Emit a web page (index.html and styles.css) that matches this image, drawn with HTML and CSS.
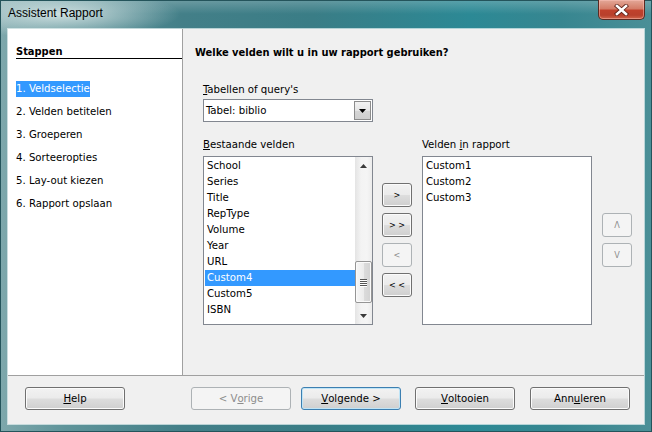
FILE: index.html
```html
<!DOCTYPE html>
<html>
<head>
<meta charset="utf-8">
<title>Assistent Rapport</title>
<link rel="stylesheet" href="styles.css">
</head>
<body>
<div class="window">
  <div class="titlebar">
    <span class="title">Assistent Rapport</span>
    <div class="close">
      <svg width="17" height="12" viewBox="0 0 17 12">
        <path d="M4 2 L13 10 M13 2 L4 10" stroke="#5a1f16" stroke-width="4.2" stroke-linecap="square" fill="none"/>
        <path d="M4 2 L13 10 M13 2 L4 10" stroke="#ffffff" stroke-width="2.6" stroke-linecap="square" fill="none"/>
      </svg>
    </div>
  </div>
  <div class="client">
    <div class="main">
      <div class="steps">
        <div class="steps-head">Stappen</div>
        <ul class="step-list">
          <li><span class="sel">1. Veldselectie</span></li>
          <li>2. Velden betitelen</li>
          <li>3. Groeperen</li>
          <li>4. Sorteeropties</li>
          <li>5. Lay-out kiezen</li>
          <li>6. Rapport opslaan</li>
        </ul>
      </div>
      <div class="content">
        <h1 class="heading">Welke velden wilt u in uw rapport gebruiken?</h1>
        <div class="field">
          <div class="label"><u>T</u>abellen of query's</div>
          <div class="combo">
            <span>Tabel: biblio</span>
            <span class="combo-btn">
              <svg width="7" height="4" viewBox="0 0 7 4"><path d="M0 0 H7 L3.5 4 Z" fill="#000"/></svg>
            </span>
          </div>
          <div class="fields">
            <div class="label lab1"><u>B</u>estaande velden</div>
            <div class="label lab2">Velden <u>i</u>n rapport</div>
            <div class="listbox list1">
              <ul class="items">
                <li>School</li>
                <li>Series</li>
                <li>Title</li>
                <li>RepType</li>
                <li>Volume</li>
                <li>Year</li>
                <li>URL</li>
                <li class="selected">Custom4</li>
                <li>Custom5</li>
                <li>ISBN</li>
              </ul>
              <div class="scrollbar">
                <div class="sb-btn">
                  <svg width="7" height="4" viewBox="0 0 7 4"><path d="M0 4 H7 L3.5 0 Z" fill="#3a3a3a"/></svg>
                </div>
                <div class="sb-track">
                  <div class="sb-thumb">
                    <span class="grip"></span><span class="grip"></span><span class="grip"></span><span class="grip"></span>
                  </div>
                </div>
                <div class="sb-btn">
                  <svg width="7" height="4" viewBox="0 0 7 4"><path d="M0 0 H7 L3.5 4 Z" fill="#3a3a3a"/></svg>
                </div>
              </div>
            </div>
            <div class="movebtns">
              <div class="btn small">&gt;</div>
              <div class="btn small">&gt; &gt;</div>
              <div class="btn small disabled">&lt;</div>
              <div class="btn small">&lt; &lt;</div>
            </div>
            <div class="listbox list2">
              <ul class="items">
                <li>Custom1</li>
                <li>Custom2</li>
                <li>Custom3</li>
              </ul>
            </div>
            <div class="orderbtns">
              <div class="btn small disabled">&#923;</div>
              <div class="btn small disabled">V</div>
            </div>
          </div>
        </div>
      </div>
    </div>
    <div class="footer">
      <div class="btn wide help"><u>H</u>elp</div>
      <div class="btn wide disabled prev">&lt; V<u>o</u>rige</div>
      <div class="btn wide default next"><u>V</u>olgende &gt;</div>
      <div class="btn wide finish"><u>V</u>oltooien</div>
      <div class="btn wide cancel">Ann<u>u</u>leren</div>
    </div>
  </div>
</div>
</body>
</html>
```
FILE: styles.css
```css
* { box-sizing: border-box; }
html, body { margin: 0; padding: 0; }
body {
  width: 652px;
  height: 432px;
  overflow: hidden;
  font-family: "DejaVu Sans Condensed", "DejaVu Sans", sans-serif;
  font-stretch: condensed;
  font-size: 11.3px;
  color: #000;
}
u { text-decoration: underline; text-underline-offset: 1px; }

.window {
  width: 652px;
  height: 432px;
  display: flex;
  flex-direction: column;
  padding: 0 8px 8px 8px;
  background:
    radial-gradient(ellipse 120px 24px at 60px 14px, rgba(225,236,236,0.85), rgba(225,236,236,0) 100%),
    linear-gradient(180deg, rgba(255,255,255,0.22) 0, rgba(255,255,255,0) 14px),
    linear-gradient(90deg, #7ea8ac 0%, #5f949a 10%, #437f88 28%, #3a7d86 48%, #2c8995 72%, #378690 86%, #4a8f97 100%);
  box-shadow: inset 0 0 0 1px #24545b;
}

.titlebar {
  height: 29px;
  display: flex;
  justify-content: space-between;
  align-items: flex-start;
}
.title {
  margin-top: 7px;
  line-height: 13px;
  color: #000;
  font-family: "Liberation Sans", Arial, sans-serif;
  font-stretch: normal;
  font-size: 12px;
}
.close {
  width: 47px;
  height: 20px;
  margin-right: -1px;
  border: 1px solid #5b2a22;
  border-top: none;
  border-radius: 0 0 5px 5px;
  background: linear-gradient(180deg, #e3a898 0%, #d47d68 45%, #c0412c 55%, #b8402c 80%, #d0664c 100%);
  box-shadow: inset 0 0 0 1px rgba(255,200,190,0.45);
  display: flex;
  align-items: center;
  justify-content: center;
}

.client {
  flex: 1;
  display: flex;
  flex-direction: column;
  background: #f0f0f0;
  box-shadow: 0 0 0 1px rgba(235,245,245,0.7);
}
.main {
  height: 347px;
  display: flex;
  border-bottom: 1px solid #a0a0a0;
}
.steps {
  width: 175px;
  background: #fff;
  border-right: 1px solid #a0a0a0;
  padding-left: 8px;
}
.steps-head {
  margin-top: 17px;
  line-height: 12px;
  font-size: 11px;
  font-weight: bold;
  border-bottom: 1px solid #000;
}
.step-list {
  list-style: none;
  margin: 22px 0 0 0;
  padding: 0;
}
.step-list li {
  line-height: 16px;
  height: 16px;
  margin-bottom: 7px;
  white-space: nowrap;
}
.sel {
  display: inline-block;
  background: #3399ff;
  color: #fff;
  line-height: 16px;
}

.content {
  flex: 1;
  padding: 16px 0 0 12px;
}
.heading {
  margin: 0 0 22px 0;
  font-size: 11px;
  font-weight: bold;
  line-height: 16px;
}
.field { margin-left: 8px; }
.label {
  line-height: 14px;
  margin-bottom: 2px;
  white-space: nowrap;
}
.combo {
  width: 170px;
  height: 23px;
  border: 1px solid #828790;
  background: #fff;
  display: flex;
  align-items: center;
  justify-content: space-between;
  padding: 1px 1px 1px 2px;
  margin-bottom: 16px;
}
.combo-btn {
  width: 17px;
  height: 19px;
  border: 1px solid #8c8c8c;
  background: linear-gradient(180deg, #f2f2f2 0%, #e6e6e6 50%, #d6d6d6 51%, #cfcfcf 100%);
  display: flex;
  align-items: center;
  justify-content: center;
}

.fields {
  display: grid;
  grid-template-columns: 170px 9px 30px 10px 170px 10px 30px;
  grid-template-rows: auto 169px;
}
.lab1 { grid-column: 1; grid-row: 1; margin-bottom: 4px; }
.lab2 { grid-column: 5; grid-row: 1; margin-bottom: 4px; }
.list1 { grid-column: 1; grid-row: 2; }
.movebtns { grid-column: 3; grid-row: 2; }
.list2 { grid-column: 5; grid-row: 2; }
.orderbtns { grid-column: 7; grid-row: 2; }

.listbox {
  height: 169px;
  border: 1px solid #828790;
  background: #fff;
  display: flex;
}
.items {
  flex: 1;
  list-style: none;
  margin: 0;
  padding: 1px 0 0 1px;
}
.items li {
  height: 16px;
  line-height: 16px;
  padding-left: 2px;
  white-space: nowrap;
}
.items li.selected {
  background: #3399ff;
  color: #fff;
}

.scrollbar {
  width: 17px;
  display: flex;
  flex-direction: column;
  background: linear-gradient(90deg, #e4e4e4 0%, #f3f3f3 35%, #f5f5f5 70%, #ececec 100%);
}
.sb-btn {
  height: 17px;
  display: flex;
  align-items: center;
  justify-content: center;
}
.sb-track {
  flex: 1;
  padding-top: 87px;
}
.sb-thumb {
  width: 17px;
  height: 42px;
  border: 1px solid #959595;
  border-radius: 2px;
  background: linear-gradient(90deg, #f6f6f6 0%, #ececec 50%, #dcdcdc 51%, #d2d2d2 100%);
  box-shadow: inset 0 0 0 1px #fafafa;
  display: flex;
  flex-direction: column;
  align-items: center;
  justify-content: center;
  gap: 1px;
}
.grip {
  width: 7px;
  height: 1px;
  background: #555;
  box-shadow: 0 1px 0 #fff;
}

.btn {
  display: flex;
  align-items: center;
  justify-content: center;
  border: 1px solid #707070;
  border-radius: 3px;
  background: linear-gradient(180deg, #f2f2f2 0%, #ebebeb 48%, #dddddd 52%, #cfcfcf 100%);
  box-shadow: inset 0 0 0 1px #fbfbfb;
  color: #000;
  white-space: nowrap;
}
.btn.disabled {
  border-color: #adb2b5;
  background: #f4f4f4;
  color: #8d8d8d;
  box-shadow: none;
}
.btn.default {
  border-color: #3c7fb1;
  box-shadow: inset 0 0 0 1px #bfe4f6;
}
.btn.small {
  width: 30px;
  height: 24px;
  font-size: 9px;
}
.movebtns, .orderbtns {
  display: flex;
  flex-direction: column;
  gap: 6px;
}
.movebtns { padding-top: 27px; }
.orderbtns { padding-top: 57px; }

.footer {
  flex: 1;
  display: flex;
  align-items: flex-start;
  padding: 11px 0 0 17px;
}
.btn.wide {
  width: 100px;
  height: 23px;
}
.prev { margin-left: 66px; }
.next { margin-left: 10px; }
.finish { margin-left: 14px; }
.cancel { margin-left: 15px; }
```
